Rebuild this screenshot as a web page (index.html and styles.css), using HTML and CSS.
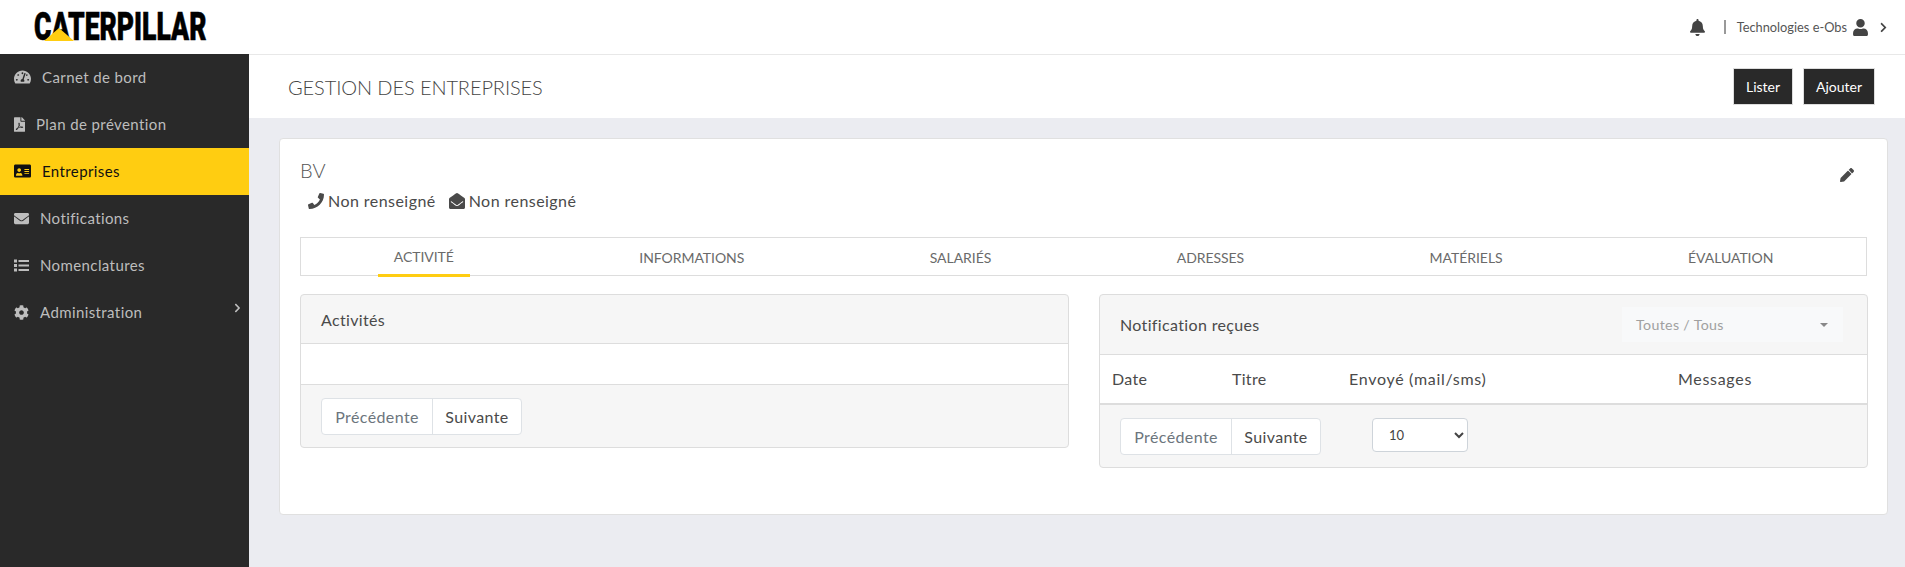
FILE: index.html
```html
<!DOCTYPE html>
<html lang="fr">
<head>
    <meta charset="UTF-8">
    <title>Gestion des entreprises</title>
    <link rel="stylesheet" href="styles.css">
</head>
<body>
    <header class="topbar">
        <div class="logo">
            <span class="logo-text">CATERPILLAR</span>
            <svg class="logo-mark" viewBox="0 0 30 13"><polygon points="15,0 30,13 0,13" fill="#ffcd11"/></svg>
        </div>
        <div class="topbar-right">
            <svg class="ico bell" viewBox="0 0 448 512"><path d="M224 512c35.32 0 63.97-28.65 63.97-64H160.03c0 35.35 28.65 64 63.97 64zm215.39-149.71c-19.32-20.76-55.47-51.99-55.47-154.29 0-77.7-54.48-139.9-127.94-155.16V32c0-17.67-14.32-32-31.98-32s-31.98 14.33-31.98 32v20.84C118.56 68.1 64.08 130.3 64.08 208c0 102.3-36.15 133.53-55.47 154.29-6 6.45-8.66 14.16-8.61 21.71.11 16.4 12.98 32 32.1 32h383.8c19.12 0 32-15.6 32.1-32 .05-7.55-2.61-15.27-8.61-21.71z"/></svg>
            <span class="sep"></span>
            <span class="user-name">Technologies e-Obs</span>
            <svg class="ico user" viewBox="0 0 448 512"><path d="M224 256c70.7 0 128-57.3 128-128S294.7 0 224 0 96 57.3 96 128s57.3 128 128 128zm89.6 32h-16.7c-22.2 10.2-46.9 16-72.9 16s-50.6-5.8-72.9-16h-16.7C60.2 288 0 348.2 0 422.4V464c0 26.5 21.5 48 48 48h352c26.5 0 48-21.5 48-48v-41.6c0-74.2-60.2-134.4-134.4-134.4z"/></svg>
            <svg class="ico chev" viewBox="0 0 320 512"><path d="M285.476 272.971L91.132 467.314c-9.373 9.373-24.569 9.373-33.941 0l-22.667-22.667c-9.357-9.357-9.375-24.522-.04-33.901L188.505 256 34.484 101.255c-9.335-9.379-9.317-24.544.04-33.901l22.667-22.667c9.373-9.373 24.569-9.373 33.941 0L285.475 239.03c9.373 9.372 9.373 24.568.001 33.941z"/></svg>
        </div>
    </header>

    <div class="layout">
        <nav class="sidebar">
            <a class="nav-item">
                <svg class="ico w17" viewBox="0 0 576 512"><path d="M288 32C128.94 32 0 160.94 0 320c0 52.8 14.25 102.26 39.06 144.8 5.61 9.62 16.3 15.2 27.44 15.2h443c11.14 0 21.83-5.58 27.44-15.2C561.75 422.26 576 372.8 576 320c0-159.06-128.94-288-288-288zm0 64c14.71 0 26.58 10.13 30.32 23.65-1.11 2.26-2.64 4.23-3.45 6.67l-9.22 27.67c-5.13 3.49-10.97 6.01-17.64 6.01-17.67 0-32-14.33-32-32S270.33 96 288 96zM96 384c-17.67 0-32-14.33-32-32s14.33-32 32-32 32 14.33 32 32-14.33 32-32 32zm48-160c-17.67 0-32-14.33-32-32s14.33-32 32-32 32 14.33 32 32-14.33 32-32 32zm246.77-72.41l-61.33 184C343.13 347.33 352 364.54 352 384c0 11.72-3.38 22.55-8.88 32H232.88c-5.5-9.45-8.88-20.28-8.88-32 0-33.94 26.5-61.43 59.9-63.59l61.34-184.01c4.17-12.56 17.73-19.45 30.36-15.17 12.57 4.19 19.35 17.79 15.17 30.36zm14.66 57.2l15.52-46.55c3.47-1.29 7.13-2.23 11.05-2.23 17.67 0 32 14.33 32 32s-14.33 32-32 32c-11.38-.01-20.89-6.28-26.57-15.22zM480 384c-17.67 0-32-14.33-32-32s14.33-32 32-32 32 14.33 32 32-14.33 32-32 32z"/></svg>
                Carnet de bord
            </a>
            <a class="nav-item">
                <svg class="ico w11" viewBox="0 0 384 512"><path d="M181.9 256.1c-5-16-4.9-46.9-2-46.9 8.4 0 7.6 36.9 2 46.9zm-1.7 47.2c-7.7 20.2-17.3 43.3-28.4 62.7 18.3-7 39-17.2 62.9-21.9-12.7-9.6-24.9-23.4-34.5-40.8zM86.1 428.1c0 .8 13.2-5.4 34.9-40.2-6.7 6.3-29.1 24.5-34.9 40.2zM248 160h136v328c0 13.3-10.7 24-24 24H24c-13.3 0-24-10.7-24-24V24C0 10.7 10.7 0 24 0h200v136c0 13.2 10.8 24 24 24zm-8 171.8c-20-12.2-33.3-29-42.7-53.8 4.5-18.5 11.6-46.6 6.2-64.2-4.7-29.4-42.4-26.5-47.8-6.8-5 18.3-.4 44.1 8.1 77-11.6 27.6-28.7 64.6-40.8 85.8-.1 0-.1.1-.2.1-27.1 13.9-73.6 44.5-54.5 68 5.6 6.9 16 10 21.5 10 17.9 0 35.7-18 61.1-61.8 25.8-8.5 54.1-19.1 79-23.2 21.7 11.8 47.1 19.5 64 19.5 29.2 0 31.2-32 19.7-43.4-13.9-13.6-54.3-9.7-73.6-7.2zM377 105L279 7c-4.5-4.5-10.6-7-17-7h-6v128h128v-6.1c0-6.3-2.5-12.4-7-16.9zm-74.1 255.3c4.1-2.7-2.5-11.9-42.8-9 37.1 15.8 42.8 9 42.8 9z"/></svg>
                Plan de prévention
            </a>
            <a class="nav-item active">
                <svg class="ico w17" viewBox="0 0 576 512"><path d="M528 32H48C21.5 32 0 53.5 0 80v352c0 26.5 21.5 48 48 48h480c26.500 0 48-21.500 48-48V80c0-26.500-21.500-48-48-48z"/><path class="id-detail" d="M352 200c0-4.400 3.600-8 8-8h144c4.400 0 8 3.600 8 8v16c0 4.400-3.600 8-8 8H360c-4.400 0-8-3.600-8-8v-16zm0 64c0-4.400 3.600-8 8-8h144c4.400 0 8 3.600 8 8v16c0 4.400-3.600 8-8 8H360c-4.400 0-8-3.600-8-8v-16zm0 64c0-4.400 3.600-8 8-8h144c4.400 0 8 3.600 8 8v16c0 4.400-3.600 8-8 8H360c-4.400 0-8-3.600-8-8v-16zM176 160c35.300 0 64 28.700 64 64s-28.700 64-64 64-64-28.700-64-64 28.700-64 64-64zM67.100 396.200C75.500 350.500 99.600 322 128 322h8.200c12.300 5.100 25.700 8 39.800 8s27.600-2.900 39.800-8h8.200c28.400 0 52.500 28.500 60.900 74.200 3.200 9.900-5.200 19.800-15.600 19.800H82.700c-10.400 0-18.800-10-15.600-19.800z"/></svg>
                Entreprises
            </a>
            <a class="nav-item">
                <svg class="ico w15" viewBox="0 0 512 512"><path d="M502.3 190.8c3.9-3.1 9.7-.2 9.7 4.7V400c0 26.5-21.5 48-48 48H48c-26.5 0-48-21.5-48-48V195.6c0-5 5.7-7.8 9.7-4.7 22.4 17.4 52.1 39.5 154.1 113.6 21.1 15.4 56.7 47.8 92.2 47.6 35.7.3 72-32.8 92.3-47.6 102-74.1 131.6-96.3 154-113.7zM256 320c23.2.4 56.6-29.2 73.4-41.4 132.7-96.3 142.8-104.7 173.4-128.7 5.8-4.5 9.2-11.5 9.2-18.9v-19c0-26.5-21.5-48-48-48H48C21.5 64 0 85.5 0 112v19c0 7.4 3.4 14.3 9.2 18.9 30.6 23.9 40.7 32.4 173.4 128.7 16.8 12.2 50.2 41.8 73.4 41.4z"/></svg>
                Notifications
            </a>
            <a class="nav-item">
                <svg class="ico w15" viewBox="0 0 15 12"><path d="M0 0h3v3H0zM0 4.5h3v3H0zM0 9h3v3H0zM4.5.5H15v2H4.5zM4.5 5H15v2H4.5zM4.5 9.500H15v2H4.5z"/></svg>
                Nomenclatures
            </a>
            <a class="nav-item">
                <svg class="ico w15" viewBox="0 0 512 512"><path d="M487.4 315.7l-42.6-24.6c4.3-23.2 4.3-47 0-70.2l42.6-24.6c4.9-2.8 7.1-8.6 5.5-14-11.1-35.6-30-67.8-54.7-94.6-3.8-4.1-10-5.1-14.8-2.300L380.8 110c-17.9-15.4-38.5-27.3-60.8-35.1V25.800c0-5.6-3.9-10.5-9.4-11.7-36.7-8.2-74.3-7.800-109.2 0-5.500 1.200-9.400 6.100-9.400 11.700V75c-22.200 7.900-42.800 19.800-60.800 35.100L88.700 85.500c-4.900-2.800-11-1.900-14.800 2.300-24.700 26.700-43.600 58.900-54.700 94.600-1.700 5.400.6 11.200 5.500 14L67.300 221c-4.300 23.200-4.300 47 0 70.200l-42.600 24.600c-4.900 2.800-7.100 8.600-5.500 14 11.100 35.600 30 67.800 54.700 94.600 3.800 4.100 10 5.100 14.800 2.300l42.600-24.600c17.900 15.400 38.500 27.300 60.800 35.100v49.200c0 5.600 3.900 10.500 9.400 11.700 36.700 8.200 74.300 7.800 109.200 0 5.500-1.200 9.400-6.100 9.400-11.700v-49.200c22.200-7.900 42.800-19.800 60.800-35.100l42.600 24.600c4.900 2.800 11 1.900 14.800-2.300 24.700-26.700 43.600-58.900 54.700-94.600 1.500-5.500-.7-11.300-5.600-14.100zM256 336c-44.100 0-80-35.900-80-80s35.900-80 80-80 80 35.900 80 80-35.900 80-80 80z"/></svg>
                Administration
                <svg class="ico nav-chev" viewBox="0 0 320 512"><path d="M285.476 272.971L91.132 467.314c-9.373 9.373-24.569 9.373-33.941 0l-22.667-22.667c-9.357-9.357-9.375-24.522-.04-33.901L188.505 256 34.484 101.255c-9.335-9.379-9.317-24.544.04-33.901l22.667-22.667c9.373-9.373 24.569-9.373 33.941 0L285.475 239.03c9.373 9.372 9.373 24.568.001 33.941z"/></svg>
            </a>
        </nav>

        <main class="main">
            <div class="title-bar">
                <h1>GESTION DES ENTREPRISES</h1>
                <div class="title-actions">
                    <a class="btn btn-lister">Lister</a>
                    <a class="btn btn-ajouter">Ajouter</a>
                </div>
            </div>

            <div class="content">
                <section class="card">
                    <div class="card-head">
                        <div>
                            <h2>BV</h2>
                            <div class="contact">
                                <svg class="ico phone" viewBox="0 0 512 512"><path d="M493.400 24.600l-104-24c-11.300-2.600-22.900 3.300-27.500 13.900l-48 112c-4.200 9.800-1.400 21.300 6.900 28l60.600 49.600c-36 76.700-98.900 140.500-177.200 177.200l-49.600-60.600c-6.800-8.300-18.200-11.100-28-6.900l-112 48C3.900 366.500-2 378.100.6 389.400l24 104C27.100 504.200 36.700 512 48 512c256.100 0 464-207.500 464-464 0-11.200-7.700-20.900-18.600-23.400z"/></svg>
                                <span class="contact-text">Non renseigné</span>
                                <svg class="ico open-mail" viewBox="0 0 512 512"><path d="M512 464c0 26.510-21.490 48-48 48H48c-26.510 0-48-21.490-48-48V200.724a48 48 0 0 1 18.387-37.776c24.913-19.529 45.501-35.365 164.200-121.511C199.412 29.170 232.797-.347 256 .003c23.198-.354 56.596 29.172 73.413 41.433 118.687 86.137 139.303 101.995 164.200 121.512A48 48 0 0 1 512 200.724V464zm-65.666-196.605c-2.563-3.728-7.700-4.595-11.339-1.907-22.845 16.873-55.462 40.705-105.582 77.079-16.825 12.266-50.210 41.781-73.413 41.430-23.211.344-56.559-29.143-73.413-41.430-50.114-36.370-82.734-60.204-105.582-77.079-3.639-2.688-8.776-1.821-11.339 1.907l-9.072 13.196a7.998 7.998 0 0 0 1.839 10.967c22.887 16.899 55.454 40.690 105.303 76.868 20.274 14.781 56.524 47.813 92.264 47.573 35.724.242 71.961-32.771 92.263-47.573 49.850-36.179 82.418-59.970 105.303-76.868a7.998 7.998 0 0 0 1.839-10.967l-9.071-13.196z"/></svg>
                                <span class="contact-text">Non renseigné</span>
                            </div>
                        </div>
                        <svg class="ico edit" viewBox="0 0 512 512"><path d="M497.900 142.100l-46.100 46.100c-4.700 4.700-12.300 4.700-17 0l-111-111c-4.700-4.700-4.700-12.300 0-17l46.100-46.100c18.700-18.700 49.100-18.700 67.900 0l60.100 60.100c18.800 18.700 18.800 49.100 0 67.900zM284.200 99.800L21.600 362.400.4 483.900c-2.900 16.400 11.400 30.600 27.800 27.800l121.500-21.300 262.600-262.600c4.700-4.700 4.700-12.300 0-17l-111-111c-4.800-4.700-12.400-4.700-17.100 0z"/></svg>
                    </div>

                    <ul class="tabs">
                        <li class="tab active">ACTIVITÉ</li>
                        <li class="tab">INFORMATIONS</li>
                        <li class="tab">SALARIÉS</li>
                        <li class="tab">ADRESSES</li>
                        <li class="tab">MATÉRIELS</li>
                        <li class="tab">ÉVALUATION</li>
                    </ul>

                    <div class="panels">
                        <div class="panel">
                            <div class="panel-head panel-head-sm">Activités</div>
                            <div class="panel-body"></div>
                            <div class="panel-foot">
                                <div class="pager">
                                    <a class="page-btn prev">Précédente</a>
                                    <a class="page-btn next">Suivante</a>
                                </div>
                            </div>
                        </div>

                        <div class="panel">
                            <div class="panel-head panel-head-lg">
                                Notification reçues
                                <div class="filter">
                                    <span>Toutes / Tous</span>
                                    <span class="caret"></span>
                                </div>
                            </div>
                            <table class="notif-table">
                                <thead>
                                    <tr>
                                        <th class="col-date">Date</th>
                                        <th class="col-titre">Titre</th>
                                        <th class="col-envoi">Envoyé (mail/sms)</th>
                                        <th class="col-msg">Messages</th>
                                    </tr>
                                </thead>
                            </table>
                            <div class="panel-foot">
                                <div class="pager">
                                    <a class="page-btn prev">Précédente</a>
                                    <a class="page-btn next">Suivante</a>
                                </div>
                                <select class="page-size">
                                    <option>10</option>
                                    <option>25</option>
                                    <option>50</option>
                                </select>
                            </div>
                        </div>
                    </div>
                </section>
            </div>
        </main>
    </div>
</body>
</html>
```

FILE: styles.css
```css
* {
    box-sizing: border-box;
}
html, body {
    height: 100%;
}
body {
    margin: 0;
    overflow: hidden;
    font-family: "Lato", "Open Sans", sans-serif;
    font-size: 16px;
    color: #4a4a4a;
    background: #ebecf1;
}
.ico {
    display: block;
    flex: none;
    fill: currentColor;
}

/* top bar */
.topbar {
    height: 54px;
    display: flex;
    align-items: center;
    justify-content: space-between;
    background: white;
}
.logo {
    position: relative;
    margin-left: 34px;
    width: 173px;
    height: 28px;
}
.logo-text {
    display: block;
    font-family: "Roboto", sans-serif;
    font-weight: 900;
    font-size: 39px;
    line-height: 28px;
    color: #000;
    -webkit-text-stroke: 0.6px #000;
    transform: scaleX(0.68);
    transform-origin: left center;
    white-space: nowrap;
}
.logo-mark {
    position: absolute;
    left: 10px;
    bottom: 0;
    width: 30px;
    height: 13px;
}
.topbar-right {
    display: flex;
    align-items: center;
    color: #444;
    padding-right: 18px;
}
.bell {
    width: 15px;
    height: 17px;
    margin-right: 19px;
}
.sep {
    width: 1.5px;
    height: 14px;
    background: #999;
    margin-right: 11px;
}
.user-name {
    font-size: 12.8px;
    margin-right: 6px;
    color: #555;
}
.user {
    width: 15px;
    height: 17px;
    margin-right: 12px;
}
.chev {
    width: 7px;
    height: 11px;
}

/* sidebar */
.layout {
    display: flex;
    height: calc(100% - 54px);
}
.sidebar {
    width: 249px;
    flex: none;
    background: #292929;
}
.nav-item {
    height: 47px;
    padding: 0 0 1px 14px;
    display: flex;
    align-items: center;
    gap: 11px;
    position: relative;
    color: #bdbdbd;
    font-size: 15px;
    letter-spacing: 0.4px;
}
.nav-item.active {
    background: #ffcd11;
    color: #111;
}
.id-detail {
    fill: #ffcd11;
}
.w17 {
    width: 17px;
    height: 16px;
}
.w15 {
    width: 15px;
    height: 15px;
}
.w11 {
    width: 11px;
    height: 15px;
}
.nav-chev {
    position: absolute;
    right: 8px;
    top: 14px;
    width: 7px;
    height: 10px;
}

/* main */
.main {
    flex: 1;
    min-width: 0;
}
.title-bar {
    height: 64px;
    padding: 0 30px 0 39px;
    display: flex;
    align-items: center;
    justify-content: space-between;
    background: white;
    border-top: 1px solid #e8e8e8;
}
h1 {
    margin: 0;
    font-size: 20px;
    letter-spacing: -0.1px;
    font-weight: 300;
    color: #444;
}
.title-actions {
    display: flex;
    gap: 10px;
}
.btn {
    height: 37px;
    display: flex;
    align-items: center;
    justify-content: center;
    background: #292929;
    border: 1px solid #ddd;
    color: white;
    font-size: 14px;
}
.btn-lister {
    width: 60px;
}
.btn-ajouter {
    width: 72px;
}
.content {
    padding: 20px 17px 0 30px;
}
.card {
    height: 377px;
    padding: 20px 20px 0;
    background: white;
    border: 1px solid #e0e0e0;
    border-radius: 4px;
}
.card-head {
    display: flex;
    justify-content: space-between;
}
h2 {
    margin: -1px 0 1px;
    font-size: 20px;
    line-height: 24px;
    font-weight: 300;
    color: #555;
}
.contact {
    display: flex;
    align-items: center;
    height: 24px;
    margin-top: 6px;
    margin-bottom: 1px;
    padding-left: 8px;
    font-size: 16px;
    letter-spacing: 0.45px;
}
.phone {
    width: 16px;
    height: 16px;
    margin: 1px 4px 0 0;
}
.open-mail {
    width: 16px;
    height: 16px;
    margin: 1px 4px 0 13px;
}
.edit {
    width: 14px;
    height: 14px;
    margin: 9px 13px 0 0;
}

/* tabs */
.tabs {
    list-style: none;
    margin: 24px 0 18px;
    padding: 0;
    height: 39px;
    display: flex;
    justify-content: space-around;
    border: 1px solid #ddd;
}
.tab {
    height: 39px;
    padding: 0 16px;
    display: flex;
    align-items: center;
    font-size: 14px;
    letter-spacing: -0.05px;
    color: #6a6a6a;
}
.tab.active {
    border-bottom: 3px solid #ffcd11;
    padding-top: 1px;
}

/* panels */
.panels {
    display: grid;
    grid-template-columns: 769px 769px;
    gap: 30px;
    align-items: start;
}
.panel {
    background: #f6f6f6;
    border: 1px solid #ddd;
    border-radius: 4px;
}
.panel-head {
    padding: 0 20px;
    display: flex;
    align-items: center;
    justify-content: space-between;
    border-bottom: 1px solid #ddd;
    letter-spacing: 0.35px;
}
.panel-head-sm {
    height: 49px;
}
.panel-head-lg {
    height: 60px;
}
.panel-body {
    height: 41px;
    background: white;
    border-bottom: 1px solid #ddd;
}
.panel-foot {
    height: 62px;
    padding: 13px 20px 0;
    display: flex;
    align-items: flex-start;
}
.pager {
    display: flex;
    height: 37px;
    background: white;
    border: 1px solid #dee2e6;
    border-radius: 4px;
}
.page-btn {
    display: flex;
    align-items: center;
    letter-spacing: 0.4px;
}
.prev {
    width: 111px;
    justify-content: center;
    color: #6c757d;
    border-right: 1px solid #dee2e6;
}
.next {
    width: 88px;
    justify-content: center;
    color: #4a4a4a;
}
.page-size {
    margin-left: 51px;
    width: 96px;
    height: 34px;
    padding-left: 12px;
    background: white;
    border: 1px solid #ced4da;
    border-radius: 4px;
    font-family: inherit;
    font-size: 13px;
    color: #444;
}
.filter {
    width: 221px;
    height: 35px;
    margin-right: 4px;
    padding: 0 14px;
    display: flex;
    align-items: center;
    justify-content: space-between;
    background: #f8f9fa;
    color: #a0a0a0;
    font-size: 14.2px;
}
.caret {
    width: 0;
    height: 0;
    border-left: 4px solid transparent;
    border-right: 4px solid transparent;
    border-top: 4px solid #888;
    margin-right: 1px;
}
.notif-table {
    width: 100%;
    height: 50px;
    table-layout: fixed;
    border-collapse: collapse;
    background: white;
    border-bottom: 2px solid #ddd;
}
.notif-table th {
    padding: 0 12px 1px;
    text-align: left;
    font-weight: 400;
    letter-spacing: 0.3px;
}
.col-date {
    width: 120px;
}
.col-titre {
    width: 117px;
}
.notif-table .col-envoi {
    width: 329px;
    letter-spacing: 0.7px;
}
.notif-table .col-msg {
    letter-spacing: 0.7px;
}
```
